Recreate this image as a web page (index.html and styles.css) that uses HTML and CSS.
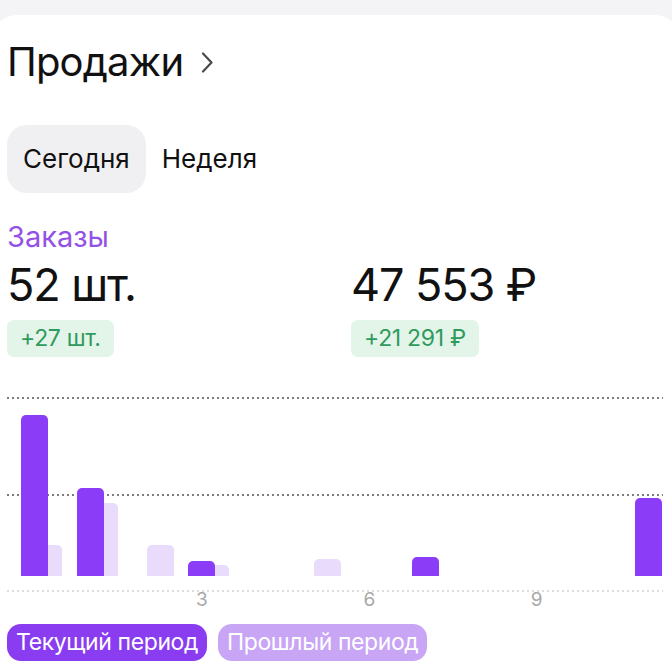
FILE: index.html
```html
<!DOCTYPE html>
<html lang="ru">
<head>
  <meta charset="UTF-8">
  <meta name="viewport" content="width=device-width, initial-scale=1.0">
  <title>Продажи</title>
  <link rel="stylesheet" href="styles.css">
</head>
<body>
  <div class="card">
    <h1 class="title">Продажи
      <svg class="chevron" width="13" height="21" viewBox="0 0 13 21"><path d="M2 1.5 L10.5 10.5 L2 19.5" fill="none" stroke="#4a4a4a" stroke-width="2.2" stroke-linecap="round" stroke-linejoin="round"/></svg>
    </h1>

    <div class="tabs">
      <span class="tab active">Сегодня</span>
      <span class="tab">Неделя</span>
    </div>

    <div class="metric-label">Заказы</div>
    <div class="metrics">
      <div class="metric">
        <div class="value">52 шт.</div>
        <span class="delta">+27 шт.</span>
      </div>
      <div class="metric">
        <div class="value">47 553 ₽</div>
        <span class="delta">+21 291 ₽</span>
      </div>
    </div>

    <div class="chart">
      <div class="gridline top"></div>
      <div class="gridline mid"></div>
      <div class="bars">
        <div class="slot"><div class="bar cur" style="height:161px"></div><div class="bar prev" style="height:31px"></div></div>
        <div class="slot"><div class="bar cur" style="height:88px"></div><div class="bar prev" style="height:73px"></div></div>
        <div class="slot"><div class="bar prev" style="height:31px"></div></div>
        <div class="slot"><div class="bar cur" style="height:15px"></div><div class="bar prev" style="height:11px"></div></div>
        <div class="slot"></div>
        <div class="slot"><div class="bar prev" style="height:17px"></div></div>
        <div class="slot"></div>
        <div class="slot"><div class="bar cur" style="height:19px"></div></div>
        <div class="slot"></div>
        <div class="slot"></div>
        <div class="slot"></div>
        <div class="slot"><div class="bar cur" style="height:78px"></div></div>
      </div>
    </div>
    <div class="axis">
      <div class="ticks">
        <span></span><span></span><span></span><span>3</span>
        <span></span><span></span><span>6</span><span></span>
        <span></span><span>9</span><span></span><span></span>
      </div>
    </div>

    <div class="legend">
      <span class="pill cur">Текущий период</span>
      <span class="pill prev">Прошлый период</span>
    </div>
  </div>
</body>
</html>
```

FILE: styles.css
```css
* {
  margin: 0;
  padding: 0;
  box-sizing: border-box;
}

body {
  font-family: Inter, 'Noto Sans', sans-serif;
  background-color: #f4f4f6;
  color: #111;
  width: 672px;
  height: 672px;
  overflow: hidden;
}

.card {
  background: white;
  margin: 15px -12px 0 -12px;
  padding: 0 0 0 19px;
  border-radius: 30px 30px 0 0;
  height: 657px;
}

.title {
  font-size: 40px;
  font-weight: 400;
  line-height: 48px;
  padding-top: 23px;
  display: flex;
  align-items: center;
  gap: 18px;
  letter-spacing: -0.8px;
}

.chevron {
  margin-top: 1px;
}

.tabs {
  display: flex;
  margin-top: 39px;
}

.tab {
  font-size: 26px;
  line-height: 32px;
  padding: 18px 16px;
  border-radius: 20px;
}

.tab.active {
  background: #f0f0f2;
}

.metric-label {
  color: #9451e6;
  font-size: 29px;
  line-height: 32px;
  margin-top: 28px;
}

.metrics {
  display: grid;
  grid-template-columns: 344px 1fr;
  margin-top: 7px;
}

.value {
  font-size: 45px;
  line-height: 50px;
  letter-spacing: -1.1px;
}

.delta {
  display: inline-block;
  margin-top: 10px;
  background: #e3f4e9;
  color: #2f9a5d;
  font-size: 23px;
  line-height: 27px;
  padding: 5px 13px;
  border-radius: 7px;
  letter-spacing: -0.3px;
}

.chart {
  position: relative;
  height: 178px;
  margin-top: 41px;
}

.gridline {
  position: absolute;
  left: 0;
  width: 656px;
  height: 2px;
  background: linear-gradient(to right, #7c7c7c 2px, transparent 2px) 0 0 / 5px 2px repeat-x;
}

.gridline.top {
  top: -1px;
}

.gridline.mid {
  top: 96px;
}

.bars,
.ticks {
  display: grid;
  grid-template-columns: repeat(12, 41px);
  column-gap: 14.8px;
  padding-left: 14px;
}

.bars {
  height: 100%;
}

.slot {
  position: relative;
  display: grid;
  grid-template-columns: 14px 13px 14px;
  align-items: end;
}

.bar {
  grid-row: 1;
  border-radius: 5px 5px 0 0;
}

.bar.cur {
  grid-column: 1 / 3;
  background: #8b3cf6;
  z-index: 1;
}

.bar.prev {
  grid-column: 2 / 4;
  background: #e8dbfb;
}

.axis {
  margin-top: 14px;
  width: 656px;
  padding-top: 2px;
  background: linear-gradient(to right, #dcdcdc 2px, transparent 2px) 0 0 / 5px 2px repeat-x;
}

.ticks span {
  width: 27px;
  text-align: center;
  color: #a8a8a8;
  font-size: 19px;
  line-height: 16px;
}

.legend {
  display: flex;
  gap: 11px;
  margin-top: 16px;
}

.pill {
  color: white;
  font-size: 23px;
  line-height: 27px;
  padding: 5px 9px;
  border-radius: 14px;
  letter-spacing: -0.4px;
}

.pill.cur {
  background: #8a3cf0;
}

.pill.prev {
  background: #c9a5f6;
}
```
